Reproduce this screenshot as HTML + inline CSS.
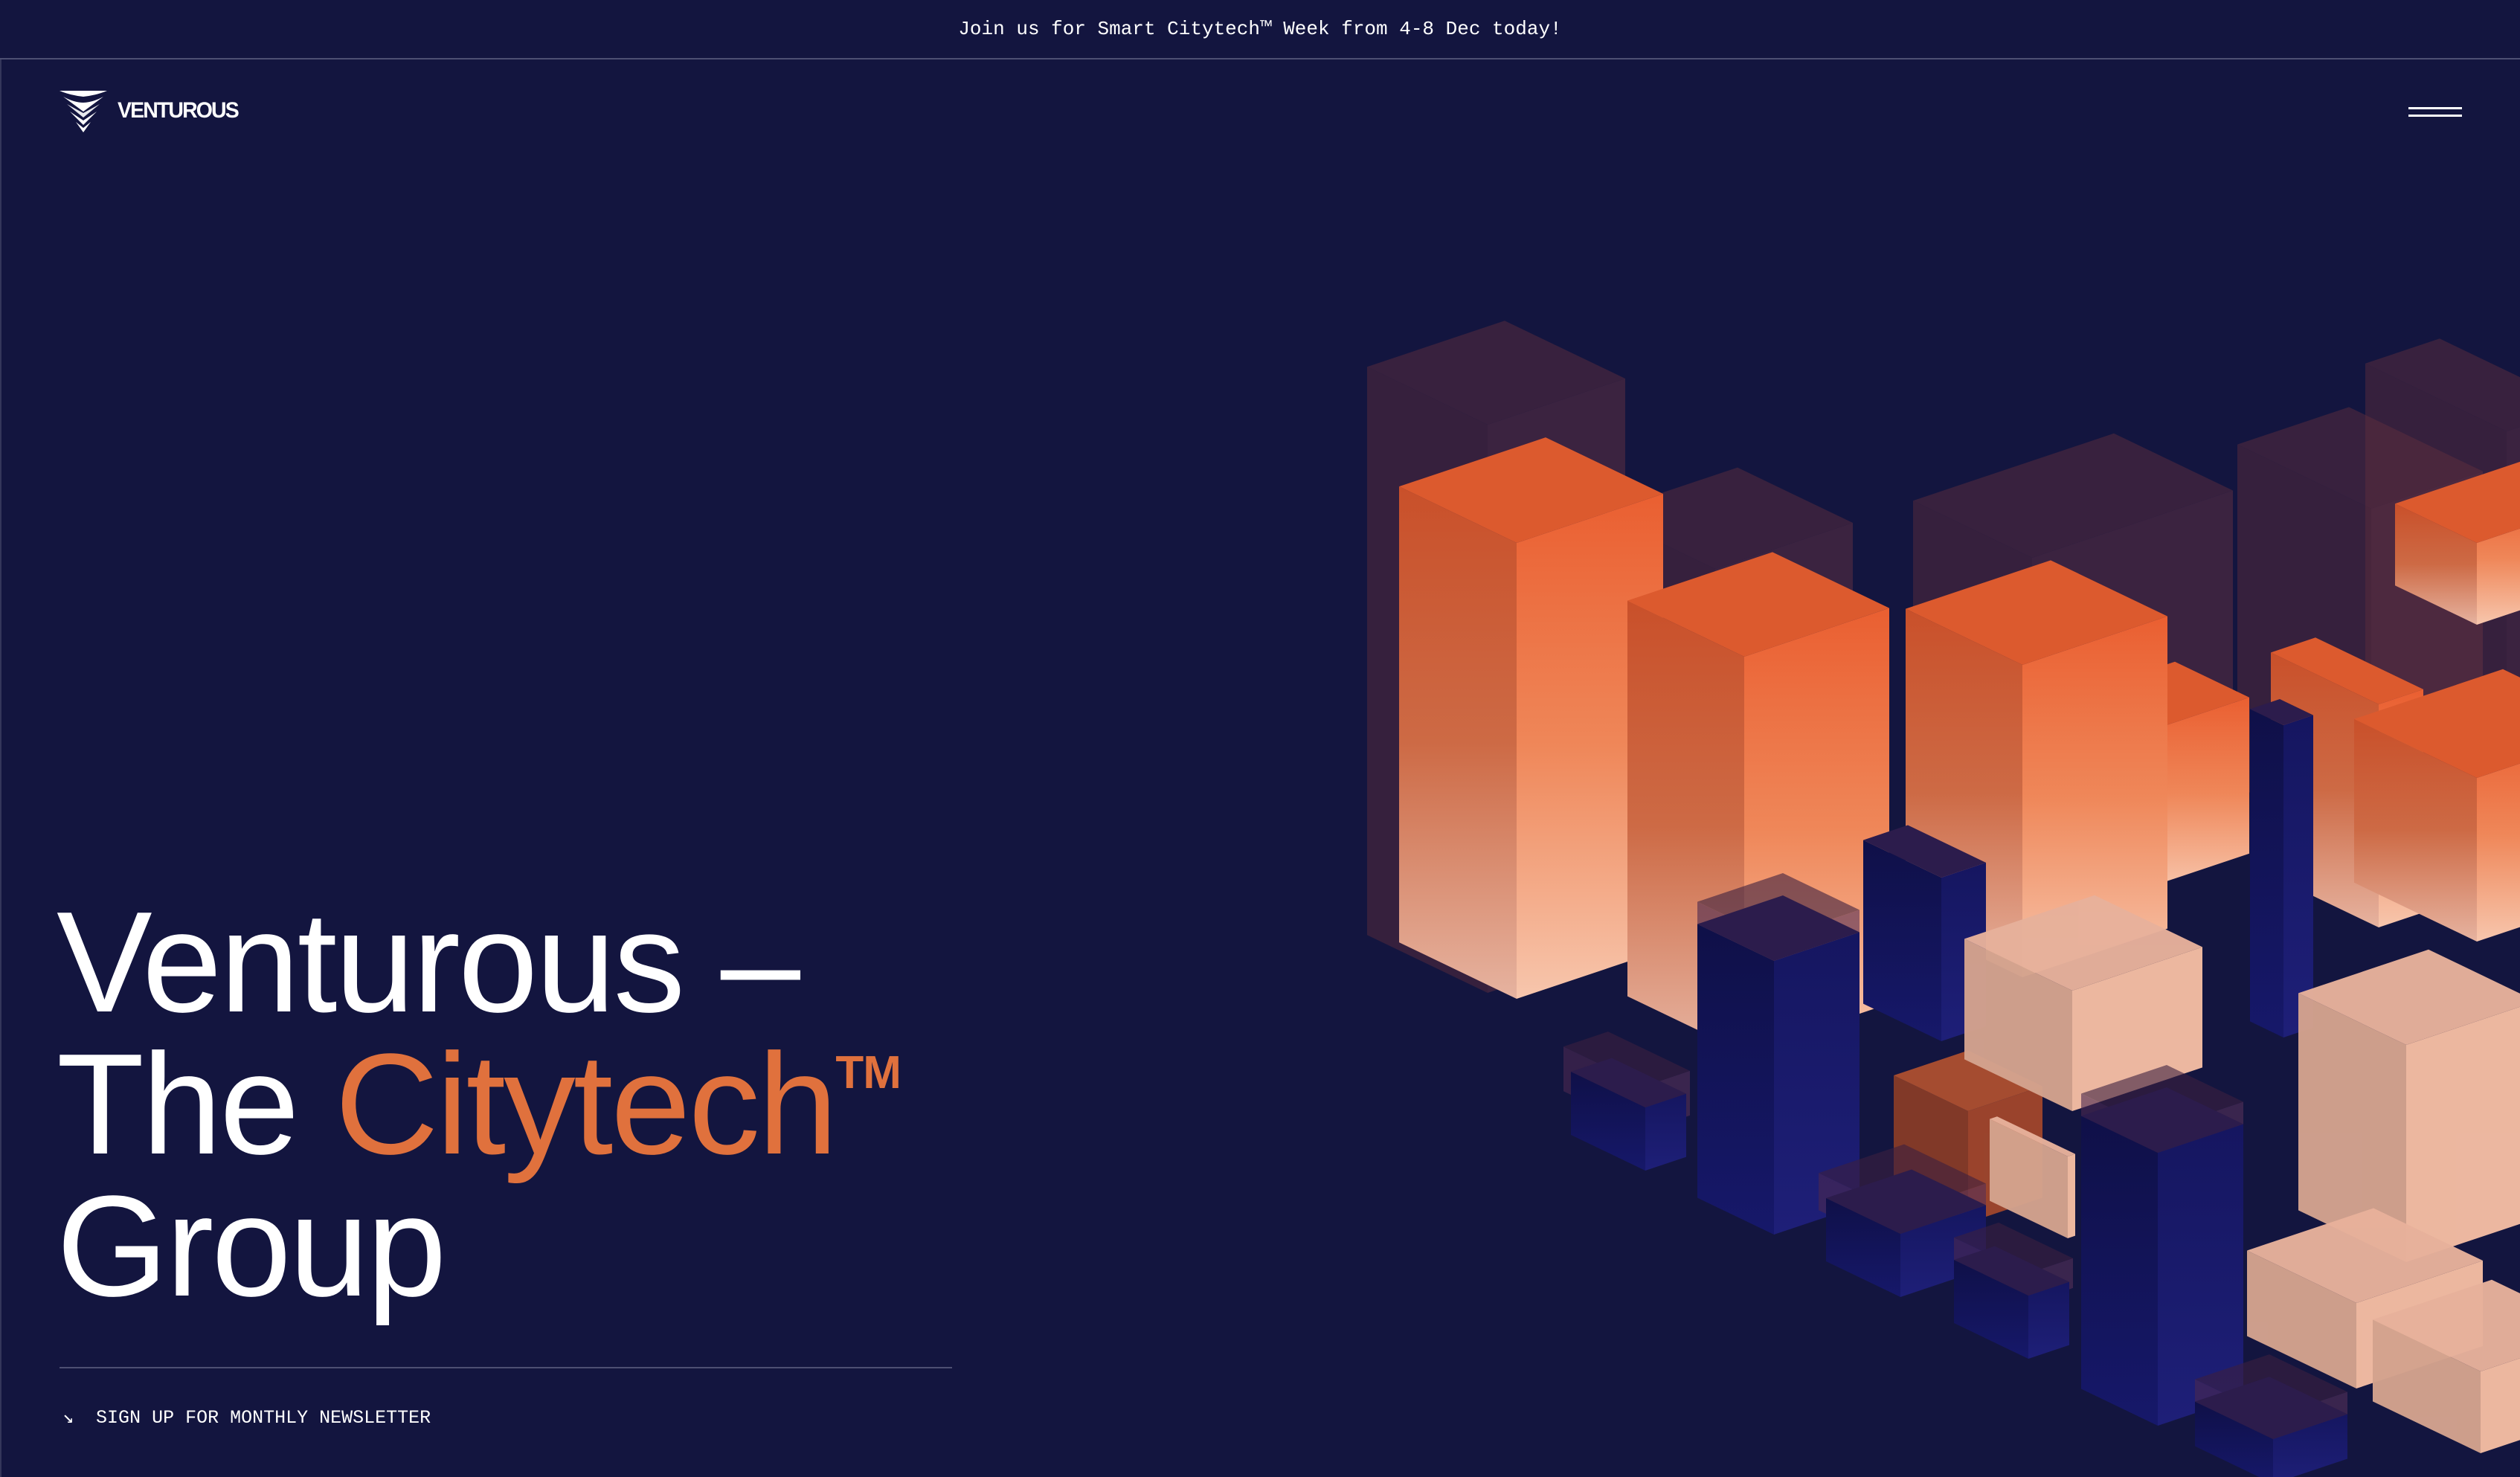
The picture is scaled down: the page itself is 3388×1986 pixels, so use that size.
<!DOCTYPE html>
<html><head><meta charset="utf-8">
<style>
html,body{margin:0;padding:0;}
body{width:3388px;height:1986px;background:#13153f;overflow:hidden;position:relative;font-family:"Liberation Sans",sans-serif;}
.top{position:absolute;left:0;top:0;width:3388px;height:78px;border-bottom:2px solid #4d4f72;text-align:center;line-height:78px;color:#fff;font-family:"Liberation Mono",monospace;font-size:26px;}
.edge{position:absolute;left:0;top:80px;width:2px;height:1906px;background:#34365a;}
.logo{position:absolute;left:80px;top:120px;}
.logotxt{position:absolute;left:158px;top:132px;color:#fff;font-size:30px;letter-spacing:-2px;font-weight:bold;transform:scaleX(.95);transform-origin:left;}
.ham{position:absolute;left:3238px;width:72px;height:3px;background:#fff;}
h1{position:absolute;left:76px;top:1198px;margin:0;font-weight:normal;color:#fff;font-size:193px;line-height:191px;letter-spacing:-3px;}
h1 div{height:191px;white-space:nowrap;}
.or{color:#e0713d;}
.tm{display:inline-block;font-size:62px;line-height:0;position:relative;top:-88px;letter-spacing:-1px;font-weight:bold;vertical-align:baseline;}
.rule{position:absolute;left:80px;top:1838px;width:1200px;height:2px;background:#4d4f72;}
.news{position:absolute;left:84px;top:1890px;color:#fff;font-family:"Liberation Mono",monospace;font-size:25px;}
svg.city{position:absolute;left:0;top:0;}
</style></head><body>
<div class="top">Join us for Smart Citytech™ Week from 4-8 Dec today!</div>
<div class="edge"></div>
<svg class="logo" width="66" height="62" viewBox="0 0 66 62">
<path d="M0 2 L64 2 Q50 8 32 10 Q14 8 0 2Z" fill="#fff"/>
<path d="M5 10 Q20 18 32 18 Q44 18 59 10 L32 30Z" fill="#fff"/>
<path d="M10 20 L32 38 L54 20 L32 32Z" fill="#fff" opacity=".9"/>
<path d="M14 30 L32 48 L50 30 L32 42Z" fill="#fff"/>
<path d="M22 44 L32 58 L42 44 L32 52Z" fill="#fff"/>
</svg>
<div class="logotxt">VENTUROUS</div>
<div class="ham" style="top:144px"></div>
<div class="ham" style="top:154px"></div>
<svg class="city" id="city" width="3388" height="1986" viewBox="0 0 3388 1986">
<defs>
<linearGradient id="oL" x1="0" y1="0" x2="0" y2="1"><stop offset="0" stop-color="#c9502a"/><stop offset=".5" stop-color="#cd6a45"/><stop offset="1" stop-color="#e6b3a0"/></linearGradient>
<linearGradient id="oR" x1="0" y1="0" x2="0" y2="1"><stop offset="0" stop-color="#ea5f31"/><stop offset=".5" stop-color="#ef8759"/><stop offset="1" stop-color="#f7c6ad"/></linearGradient>
<linearGradient id="bL" x1="0" y1="0" x2="0" y2="1"><stop offset="0" stop-color="#0f1048"/><stop offset="1" stop-color="#16186a"/></linearGradient>
<linearGradient id="bR" x1="0" y1="0" x2="0" y2="1"><stop offset="0" stop-color="#151660"/><stop offset="1" stop-color="#1e1f78"/></linearGradient>
</defs>
<g id="g"></g>
</svg>
<h1><div>Venturous –</div><div>The <span class="or">Citytech<span class="tm">TM</span></span></div><div>Group</div></h1>
<div class="rule"></div>
<div class="news">↘&nbsp;&nbsp;SIGN UP FOR MONTHLY NEWSLETTER</div>
<script>
var S={
 g:{l:"#5a2c3c",r:"#643242",t:"#5e2e3e",o:.5},
 o:{l:"url(#oL)",r:"url(#oR)",t:"#dc5a2e",o:1},
 p:{l:"#d4a38e",r:"#f4bda3",t:"#e7b19b",o:.97},
 b:{l:"url(#bL)",r:"url(#bR)",t:"#2c1c4c",o:1},
 d:{l:"#8e3e26",r:"#a9492b",t:"#b5532f",o:.9},
 c:{l:"#4a2850",r:"#553058",t:"#3c2040",o:.6}
};
var boxes=[
 ["g",3370,580,190,100,620],["g",3188,684,180,150,460],["g",2000,571,162,185,764],["g",2306,765,155,185,567],["g",2732,750,160,270,420],
 ["o",3330,730,110,200,110],["o",2039,730,158,197,613],["o",2345,883,157,195,532],["o",2874,988,100,150,210],["o",2719,894,157,195,420],
 ["o",3198,947,145,60,300],["b",3070,975,45,40,420],["o",3330,1046,165,200,220],
 ["c",2212,1460,110,60,60],["b",2212,1489,100,55,85],
 ["b",2610,1180,105,60,220],["c",2385,1262,103,115,40],["b",2385,1292,103,115,368],
 ["d",2646,1494,100,100,150],["p",2786,1332,145,175,162],["p",2780,1555,105,10,110],
 ["c",2555,1630,110,115,50],["b",2555,1659,100,115,85],["c",2727,1712,100,60,40],["b",2727,1742,100,55,85],
 ["c",2901,1520,103,115,40],["b",2901,1550,103,115,367],
 ["p",3235,1405,145,175,292],["p",3168,1752,147,170,115],["c",3056,1905,105,100,40],["b",3056,1935,105,100,60],["p",3335,1844,145,160,110]
];
var h="";
boxes.forEach(function(b){
 var s=S[b[0]],fx=b[1],fy=b[2],wl=b[3],wr=b[4],H=b[5];
 var lx=fx-wl,ly=fy-wl*0.48,rx=fx+wr,ry=fy-wr*0.335,bx=lx+wr,by=ly-wr*0.335;
 h+='<g opacity="'+s.o+'">';
 h+='<polygon points="'+lx+','+ly+' '+fx+','+fy+' '+fx+','+(fy+H)+' '+lx+','+(ly+H)+'" fill="'+s.l+'"/>';
 h+='<polygon points="'+fx+','+fy+' '+rx+','+ry+' '+rx+','+(ry+H)+' '+fx+','+(fy+H)+'" fill="'+s.r+'"/>';
 h+='<polygon points="'+lx+','+ly+' '+bx+','+by+' '+rx+','+ry+' '+fx+','+fy+'" fill="'+s.t+'"/>';
 h+='</g>';
});
document.getElementById("g").innerHTML=h;
</script>
</body></html>
